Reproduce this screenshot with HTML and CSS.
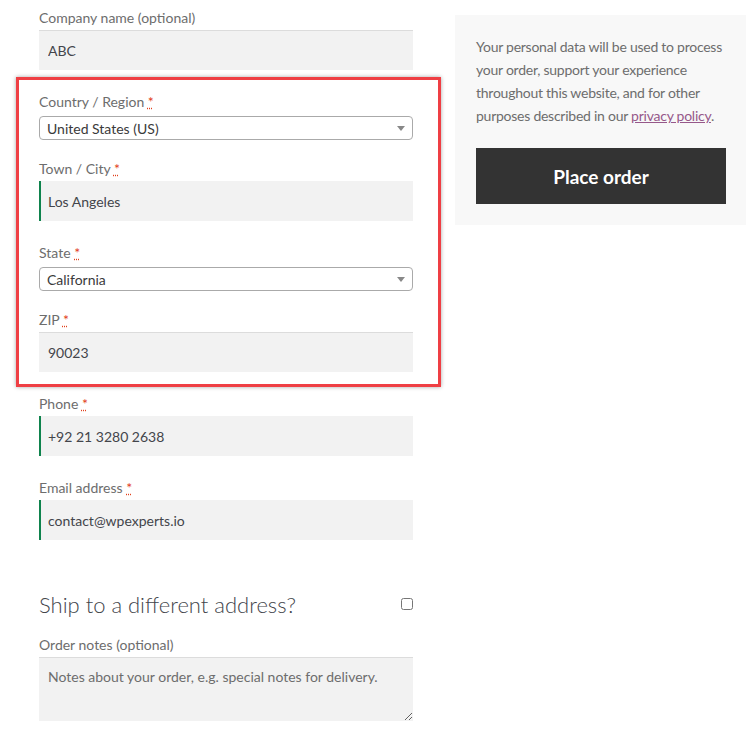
FILE: index.html
```html
<!DOCTYPE html>
<html>
<head>
    <title>Checkout</title>
    <link rel="stylesheet" href="styles.css">
</head>
<body>
    <div class="checkout">
        <div class="billing">
            <p class="field">
                <label>Company name (optional)</label>
                <input type="text" class="input-text" value="ABC">
            </p>

            <div class="highlight">
                <p class="field field-select">
                    <label>Country / Region <abbr class="required" title="required">*</abbr></label>
                    <span class="select"><span class="select-value">United States (US)</span><span class="select-arrow"></span></span>
                </p>
                <p class="field">
                    <label>Town / City <abbr class="required" title="required">*</abbr></label>
                    <input type="text" class="input-text valid" value="Los Angeles">
                </p>
                <p class="field field-select">
                    <label>State <abbr class="required" title="required">*</abbr></label>
                    <span class="select"><span class="select-value">California</span><span class="select-arrow"></span></span>
                </p>
                <p class="field last">
                    <label>ZIP <abbr class="required" title="required">*</abbr></label>
                    <input type="text" class="input-text" value="90023">
                </p>
            </div>

            <p class="field">
                <label>Phone <abbr class="required" title="required">*</abbr></label>
                <input type="text" class="input-text valid" value="+92 21 3280 2638">
            </p>
            <p class="field">
                <label>Email address <abbr class="required" title="required">*</abbr></label>
                <input type="text" class="input-text valid" value="contact@wpexperts.io">
            </p>

            <h3 class="ship-heading">
                <span>Ship to a different address?</span>
                <input type="checkbox" class="ship-check">
            </h3>

            <p class="field">
                <label>Order notes (optional)</label>
                <textarea class="input-text notes" placeholder="Notes about your order, e.g. special notes for delivery."></textarea>
            </p>
        </div>

        <div class="order-review">
            <p class="privacy">Your personal data will be used to process your order, support your experience throughout this website, and for other purposes described in our <a href="#">privacy policy</a>.</p>
            <button type="button" class="place-order">Place order</button>
        </div>
    </div>
</body>
</html>
```

FILE: styles.css
```css
body { margin: 0; font-family: Lato, "Open Sans", sans-serif; font-size: 14px; color: #6d6d6d; background: #fff; }
.checkout { display: flex; align-items: flex-start; padding: 8px 0 0 39px; }
.billing { width: 374px; }
.order-review { width: 250px; margin: 7px 0 0 42px; padding: 20px 20px 21px 21px; background: #f8f8f8; }

.field { margin: 0 0 22px; }
.field label { display: block; line-height: 20px; margin-bottom: 2px; color: #6d6d6d; }
.field.last { margin-bottom: 0; }
.field-select { margin-bottom: 19px; }
.required { color: #e2401c; text-decoration: underline dotted #e2401c; cursor: help; }

.input-text { display: block; box-sizing: border-box; width: 100%; height: 40px; margin: 0; padding: 0 9px; border: 0; border-top: 1px solid #dcdcdc; background: #f2f2f2; font-family: inherit; font-size: 14px; color: #43454b; outline: none; }
.input-text.valid { border-top: 0; border-left: 2px solid #0f834d; padding-left: 7px; }
.notes { height: 64px; padding-top: 10px; resize: vertical; }
.notes::placeholder { color: #6d6d6d; }

.select { display: flex; align-items: center; box-sizing: border-box; height: 24px; margin-top: 4px; padding: 0 7px; border: 1px solid #aaa; border-radius: 4px; background: #fff; color: #3a3a3a; }
.select-value { flex: 1; }
.select-arrow { width: 0; height: 0; border-style: solid; border-width: 5px 4px 0 4px; border-color: #888 transparent transparent transparent; }

.highlight { position: relative; }
.highlight::before { content: ""; position: absolute; top: -15px; right: -28px; bottom: -15px; left: -23px; border: 3px solid #ef3f44; box-shadow: 0 0 4px rgba(0, 0, 0, 0.35); pointer-events: none; }
.highlight + .field { margin-top: 22px; }

.ship-heading { display: flex; align-items: center; justify-content: space-between; margin: 52px 0 17px; font-size: 22px; font-weight: 300; line-height: 26px; color: #43454b; }
.ship-check { width: 12px; height: 12px; margin: 0 0 2px; }

.privacy { margin: 0 0 21px; font-size: 14px; letter-spacing: -0.25px; line-height: 23px; }
.privacy a { color: #96588a; }
.place-order { display: block; width: 100%; height: 56px; border: 0; background: #333; color: #fff; font-family: inherit; font-size: 19px; font-weight: 700; cursor: pointer; }
```
